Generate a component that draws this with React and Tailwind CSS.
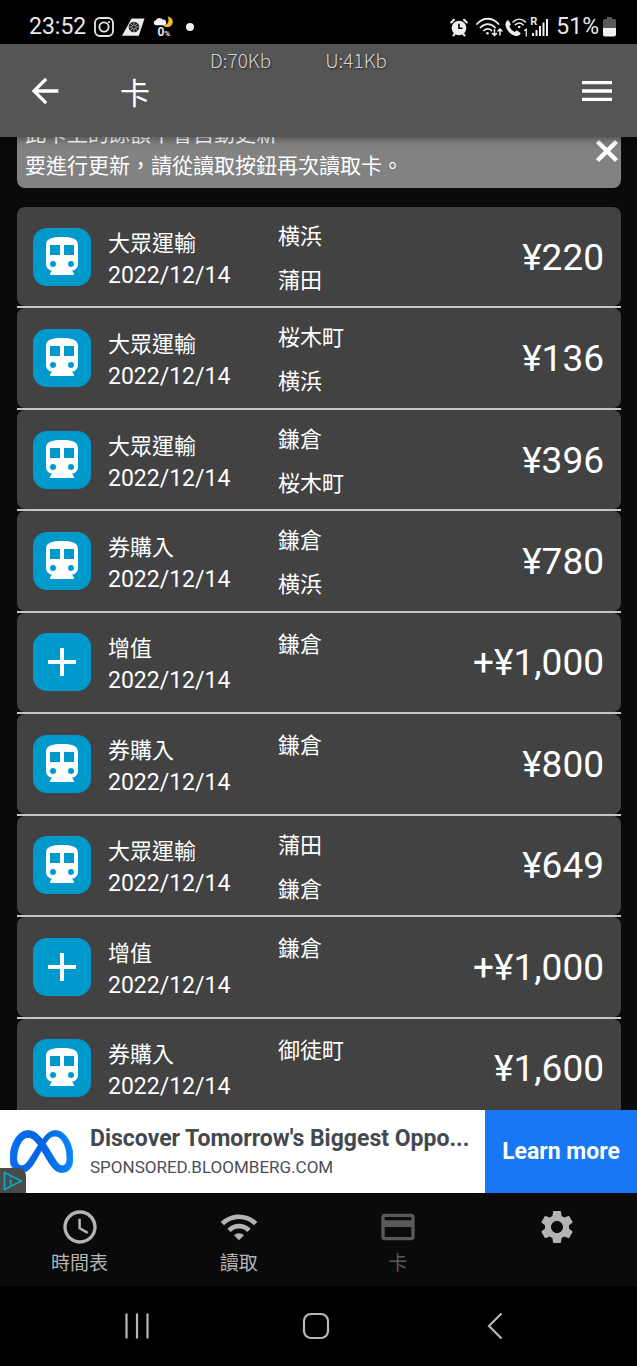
import {
  MdAccessTime,
  MdAdd,
  MdArrowBack,
  MdCreditCard,
  MdMenu,
  MdSettings,
  MdWifi,
} from "react-icons/md";
import { SiMeta } from "react-icons/si";

const history = [
  { type: "大眾運輸", date: "2022/12/14", stations: ["横浜", "蒲田"], amount: "¥220" },
  { type: "大眾運輸", date: "2022/12/14", stations: ["桜木町", "横浜"], amount: "¥136" },
  { type: "大眾運輸", date: "2022/12/14", stations: ["鎌倉", "桜木町"], amount: "¥396" },
  { type: "券購入", date: "2022/12/14", stations: ["鎌倉", "横浜"], amount: "¥780" },
  { type: "增值", date: "2022/12/14", stations: ["鎌倉"], amount: "+¥1,000", charge: true },
  { type: "券購入", date: "2022/12/14", stations: ["鎌倉"], amount: "¥800" },
  { type: "大眾運輸", date: "2022/12/14", stations: ["蒲田", "鎌倉"], amount: "¥649" },
  { type: "增值", date: "2022/12/14", stations: ["鎌倉"], amount: "+¥1,000", charge: true },
  { type: "券購入", date: "2022/12/14", stations: ["御徒町"], amount: "¥1,600" },
];

const tabs = [
  { label: "時間表", icon: MdAccessTime },
  { label: "讀取", icon: MdWifi },
  { label: "卡", icon: MdCreditCard, active: true },
  { label: "", name: "設定", icon: MdSettings },
];

function InstagramIcon() {
  return (
    <svg width="20" height="20" viewBox="0 0 20 20" fill="none" stroke="#e8e8e8" strokeWidth="1.8">
      <rect x="1" y="1" width="18" height="18" rx="5" />
      <circle cx="10" cy="10" r="4.6" />
      <circle cx="15" cy="5" r="1" fill="#e8e8e8" stroke="none" />
    </svg>
  );
}

function AirlineIcon() {
  return (
    <svg width="23" height="18" viewBox="0 0 24 18">
      <path d="M10 0h13.500L17.500 18H0z" fill="#ececec" />
      <circle cx="12.500" cy="9" r="5.600" fill="#222" />
      <g stroke="#bbb" strokeWidth="0.9">
        <path d="M12.500 4v10M7.500 9h10M9 5.500l7 7M16 5.500l-7 7" />
      </g>
      <circle cx="12.500" cy="9" r="1.400" fill="#222" />
    </svg>
  );
}

function WeatherIcon() {
  return (
    <span className="flex flex-col items-center">
      <svg width="21" height="11" viewBox="0 0 22 11">
        <path d="M15.500 0.300a5.600 5.600 0 1 1-5 8.800c5 1 7-4.500 5-8.800z" fill="#f5b932" />
        <path d="M3 9.500a2.700 2.700 0 0 1 0-5.300 4 4 0 0 1 7-.7 3 3 0 0 1 1.500 6z" fill="#f4f4f4" />
      </svg>
      <span className="text-[12px] leading-[11px] font-bold">
        0<span className="text-[8px]">%</span>
      </span>
    </span>
  );
}

function AlarmIcon() {
  return (
    <svg width="18" height="19" viewBox="0 0 18 19">
      <circle cx="9" cy="10" r="7.300" fill="#eee" />
      <g stroke="#eee" strokeWidth="2" strokeLinecap="round">
        <path d="M1.200 4.500 4 1.700M16.800 4.500 14 1.700M3.500 17.500l1.500-1.800M14.500 17.500 13 15.700" />
      </g>
      <path d="M9 5.800V10.300H12.500" stroke="#000" strokeWidth="1.600" fill="none" />
    </svg>
  );
}

function StatusWifiIcon() {
  return (
    <svg width="27" height="20" viewBox="0 0 27 20" fill="none" stroke="#eee" strokeWidth="1.800" strokeLinecap="round">
      <path d="M1 7c6-7 15.500-7 21.500 0M4.500 10.500c4-4.500 10.500-4.500 14.500 0M8 13.500c2-2.300 5.500-2.300 7.500 0" />
      <circle cx="11.500" cy="16.300" r="1.300" fill="#eee" stroke="none" />
      <path d="M18.500 12.500v6M16.500 16.500l2 2 2-2M24 18v-6M22 14l2-2 2 2" strokeWidth="1.500" />
    </svg>
  );
}

function CallIcon() {
  return (
    <svg width="23" height="19" viewBox="0 0 23 19">
      <path
        d="M3.200 2 6 6.500 4.300 8.300c1.200 2.700 3 4.500 5.500 5.600l2-1.600 4 2.900c-1 2.300-3 3-5 2.700C5.500 17 1 12 .5 7c-.2-2.200.8-4 2.700-5z"
        fill="#eee"
      />
      <g fill="none" stroke="#eee" strokeWidth="1.500" strokeLinecap="round">
        <path d="M8 4c3.800-3.700 8.700-3.700 12.500 0M10.300 6.800c2.500-2.300 5.400-2.300 7.900 0" />
        <path d="M19.500 12.500l1.800-1.200v6.700" strokeWidth="1.300" />
      </g>
      <circle cx="14.200" cy="9" r="1.300" fill="#eee" />
    </svg>
  );
}

function SignalIcon() {
  return (
    <span className="relative">
      <svg width="18" height="19" viewBox="0 0 18 19" fill="#eee">
        <path d="M2 15h2v3H2zM5.500 12h2v6h-2zM9 8h2v10H9zM12.500 4.500h2V18h-2zM16 1h2v17h-2z" />
      </svg>
      <span className="absolute left-0 -top-0.5 text-[11px] leading-[12px] font-bold">R</span>
    </span>
  );
}

function BatteryIcon() {
  return (
    <svg width="13" height="20" viewBox="0 0 13 20">
      <path d="M4 0h5v2h2.500A1.500 1.500 0 0 1 13 3.500V11H0V3.500A1.500 1.500 0 0 1 1.500 2H4z" fill="#5a5a5a" />
      <path d="M0 11h13v6.500a2 2 0 0 1-2 2H2a2 2 0 0 1-2-2z" fill="#f2f2f2" />
    </svg>
  );
}

function TrainIcon({ size }) {
  return (
    <svg width={size} height={size} viewBox="0 0 24 24" fill="currentColor" fillRule="evenodd">
      <path d="M12 2c-4.420 0-8 .5-8 4v9.500C4 17.200 5.300 18.600 7 18.900L6 20.200v.8h12v-.8l-1-1.300c1.700-.3 3-1.700 3-3.400V6c0-3.500-3.580-4-8-4zM6 6h5v5H6zM13 6h5v5h-5zM7.500 14a1.500 1.500 0 1 0 0 3 1.500 1.500 0 0 0 0-3zM16.500 14a1.500 1.500 0 1 0 0 3 1.500 1.500 0 0 0 0-3z" />
    </svg>
  );
}

function StatusBar() {
  return (
    <div className="flex h-11 shrink-0 items-center justify-between bg-black pt-2.5 pr-[21px] pl-[29px] text-[23px] text-[#e8e8e8]">
      <div className="flex items-center gap-2">
        <span>23:52</span>
        <InstagramIcon />
        <AirlineIcon />
        <WeatherIcon />
        <span className="ml-1 size-2 rounded-full bg-[#eee]" />
      </div>
      <div className="flex items-center">
        <AlarmIcon />
        <span className="ml-2">
          <StatusWifiIcon />
        </span>
        <span className="ml-0.5">
          <CallIcon />
        </span>
        <span className="ml-0.5">
          <SignalIcon />
        </span>
        <span className="ml-2">51%</span>
        <span className="ml-1">
          <BatteryIcon />
        </span>
      </div>
    </div>
  );
}

function Header() {
  return (
    <header className="relative z-10 flex h-[93px] shrink-0 items-center bg-[#555] px-5 shadow-[0_2px_8px_rgba(0,0,0,0.4)]">
      <button aria-label="返回" className="ml-[5px]">
        <MdArrowBack size={40} />
      </button>
      <h1 className="ml-[55px] flex-1 pt-1.5 text-[30px] leading-[40px]">卡</h1>
      <button aria-label="選單">
        <MdMenu size={40} />
      </button>
      {/* network speed overlay */}
      <div className="absolute top-[3px] left-[210px] flex gap-[54px] font-['Noto_Sans_CJK_JP',sans-serif] text-[19px] leading-[26px] font-light text-[#d4d4d4] [text-shadow:1px_1px_2px_#222]">
        <span>D:70Kb</span>
        <span>U:41Kb</span>
      </div>
    </header>
  );
}

function Notice() {
  return (
    <section className="-mt-7 flex items-center justify-between rounded-lg bg-[#828282] pt-[9px] pb-1.5 pl-2 text-[21px] leading-[32px]">
      <p>
        此卡上的餘額不會自動更新
        <br />
        要進行更新，請從讀取按鈕再次讀取卡。
      </p>
      <button aria-label="關閉" className="pt-0.5 pr-0.5">
        <svg width="24" height="24" viewBox="0 0 24 24" fill="none" stroke="currentColor" strokeWidth="4.400">
          <path d="M2.500 2.500l19 19M21.500 2.500l-19 19" />
        </svg>
      </button>
    </section>
  );
}

function HistoryRow(props) {
  const { data } = props;
  const Icon = data.charge ? MdAdd : TrainIcon;

  return (
    <li className="flex flex-col border-b-2 border-[#c6c6c6]">
      <div className="flex flex-1 rounded-lg bg-[#424242] pr-[17px] pl-4">
        <span className="flex size-[58px] shrink-0 items-center justify-center self-center rounded-[14px] bg-[#0099cc]">
          <Icon size={48} />
        </span>
        <div className="ml-[17px] w-[170px] shrink-0 self-center pt-1.5 leading-[32px]">
          <p className="text-[22px]">{data.type}</p>
          <p className="text-[23px]">{data.date}</p>
        </div>
        <div
          className={`flex-1 text-[22px] leading-[44px] ${
            data.stations.length > 1 ? "pt-2" : "pt-2.5"
          }`}
        >
          {data.stations.map((station) => (
            <p key={station}>{station}</p>
          ))}
        </div>
        <p className="self-center pt-0.5 text-[37px] leading-[44px]">{data.amount}</p>
      </div>
    </li>
  );
}

function AdBanner() {
  return (
    <aside className="relative flex h-[83px] shrink-0 bg-white">
      <div className="flex min-w-0 flex-1 items-center pl-2.5">
        <svg width="0" height="0" aria-hidden="true">
          <linearGradient id="metaBlue" x1="0" x2="1">
            <stop offset="0" stopColor="#0a6cf0" />
            <stop offset="0.5" stopColor="#0064e0" />
            <stop offset="1" stopColor="#0a86f8" />
          </linearGradient>
        </svg>
        <SiMeta
          size={63}
          className="shrink-0 fill-[url(#metaBlue)] stroke-[url(#metaBlue)] [stroke-width:0.3]"
        />
        <div className="ml-[17px] min-w-0 pt-0.5 whitespace-nowrap">
          <p className="text-[23px] leading-[28px] font-bold text-[#444950]">
            Discover Tomorrow's Biggest Oppo...
          </p>
          <p className="text-[17px] leading-[28px] text-[#4b4f56]">SPONSORED.BLOOMBERG.COM</p>
        </div>
      </div>
      <a
        href="#learn"
        className="flex w-[152px] shrink-0 items-center justify-center bg-[#1877f2] pt-0.5 text-[23px] font-bold"
      >
        Learn more
      </a>
      <span className="absolute bottom-0 left-0 flex h-[25px] w-[26px] items-center justify-center rounded-tr-lg bg-[#4a4a4a]">
        <svg width="20" height="20" viewBox="0 0 20 20" fill="none" stroke="#12a5c4" strokeWidth="1.800">
          <path d="M1.500 1.500 18.500 10 1.500 18.500z" strokeLinejoin="round" />
          <path d="M7.500 8.500v6M7.500 5.500v1.500" />
        </svg>
      </span>
    </aside>
  );
}

function TabBar() {
  return (
    <nav className="grid h-[93px] shrink-0 grid-cols-4 bg-[#0a0a0a]">
      {tabs.map((tab) => (
        <button
          key={tab.label || tab.name}
          aria-label={tab.label || tab.name}
          className={`flex flex-col items-center pt-3.5 text-[19px] leading-[34px] ${
            tab.active ? "text-[#5a5a5a]" : "text-[#b4b4b4]"
          }`}
        >
          <tab.icon size={40} />
          <span>{tab.label}</span>
        </button>
      ))}
    </nav>
  );
}

function SystemNav() {
  return (
    <div className="grid h-20 shrink-0 grid-cols-3 place-items-center bg-black pr-[53px] pl-[47px]">
      <button aria-label="Recents">
        <svg width="26" height="28" viewBox="0 0 26 28" stroke="#b8b8b8" strokeWidth="2.200">
          <path d="M2.500 1.500v25M13 1.500v25M23.500 1.500v25" />
        </svg>
      </button>
      <button aria-label="Home">
        <svg width="28" height="28" viewBox="0 0 28 28" fill="none" stroke="#b8b8b8" strokeWidth="2.200">
          <rect x="2" y="2" width="24" height="24" rx="7" />
        </svg>
      </button>
      <button aria-label="Back">
        <svg width="16" height="28" viewBox="0 0 16 28" fill="none" stroke="#b8b8b8" strokeWidth="2.200">
          <path d="M14.500 1.500 2 14l12.500 12.500" />
        </svg>
      </button>
    </div>
  );
}

export default function App() {
  return (
    <div className="flex h-screen flex-col overflow-hidden bg-[#0a0a0a] font-[Roboto,'Noto_Sans_CJK_TC',sans-serif] text-white">
      <StatusBar />
      <Header />
      <main className="min-h-0 flex-1 overflow-hidden pr-4 pl-[17px]">
        <Notice />
        <ul className="mt-[19px] grid min-h-[913px] auto-rows-fr">
          {history.map((item, index) => (
            <HistoryRow key={index} data={item} />
          ))}
        </ul>
      </main>
      <AdBanner />
      <TabBar />
      <SystemNav />
    </div>
  );
}
